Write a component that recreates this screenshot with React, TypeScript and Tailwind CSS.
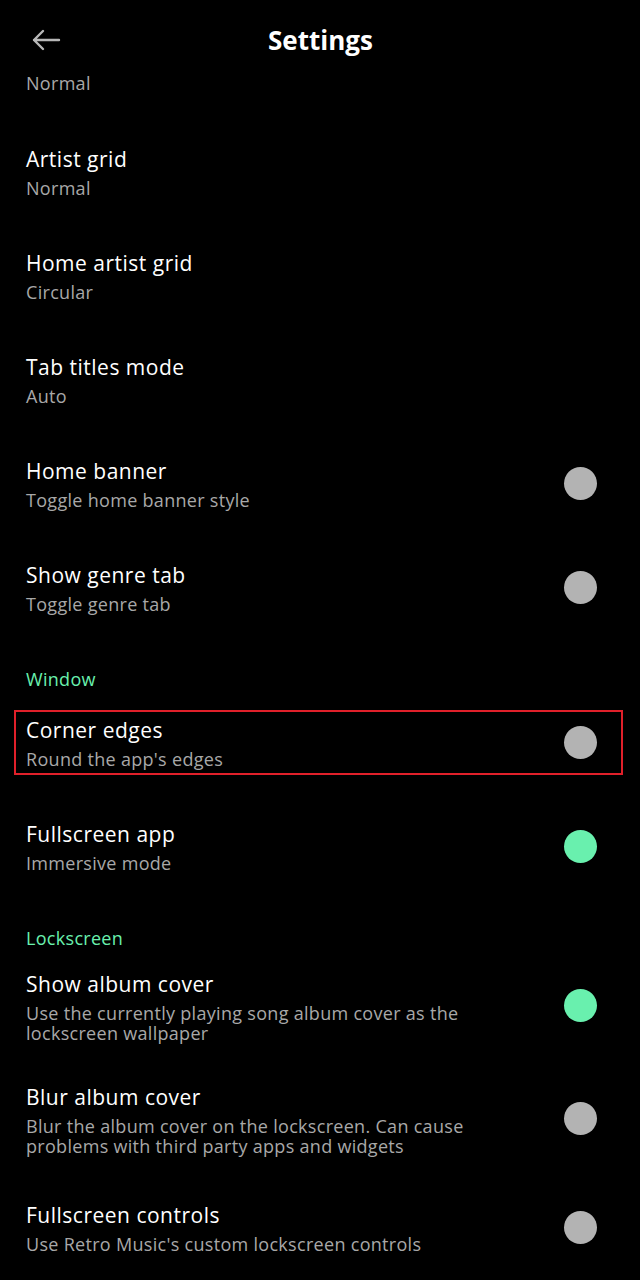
import React from 'react';

type Item = {
  title?: string;
  summary: string;
  toggle?: 'on' | 'off';
  highlight?: boolean;
};

type Section = { category?: string; items: Item[] };

const sections: Section[] = [
  {
    items: [
      { title: 'Artist grid', summary: 'Normal' },
      { title: 'Home artist grid', summary: 'Circular' },
      { title: 'Tab titles mode', summary: 'Auto' },
      { title: 'Home banner', summary: 'Toggle home banner style', toggle: 'off' },
      { title: 'Show genre tab', summary: 'Toggle genre tab', toggle: 'off' },
    ],
  },
  {
    category: 'Window',
    items: [
      { title: 'Corner edges', summary: "Round the app's edges", toggle: 'off', highlight: true },
      { title: 'Fullscreen app', summary: 'Immersive mode', toggle: 'on' },
    ],
  },
  {
    category: 'Lockscreen',
    items: [
      {
        title: 'Show album cover',
        summary: 'Use the currently playing song album cover as the lockscreen wallpaper',
        toggle: 'on',
      },
      {
        title: 'Blur album cover',
        summary: 'Blur the album cover on the lockscreen. Can cause problems with third party apps and widgets',
        toggle: 'off',
      },
      {
        title: 'Fullscreen controls',
        summary: "Use Retro Music's custom lockscreen controls",
        toggle: 'off',
      },
    ],
  },
];

function PrefRow({ item }: { item: Item }) {
  return (
    <div className="relative flex items-center min-h-[104px] py-[19.5px] pl-[26px] pr-[43px]">
      <div className="flex-1 pr-[56px]">
        <div className="text-[21px] leading-[30px] tracking-[0.5px] text-white">{item.title}</div>
        <div className="mt-1 text-[18px] leading-[20px] tracking-[0.3px] text-[#a8a8a8]">{item.summary}</div>
      </div>
      {item.toggle && (
        <div
          className={
            item.toggle === 'on'
              ? 'w-[33px] h-[33px] rounded-full bg-[#69f0ae]'
              : 'w-[33px] h-[33px] rounded-full bg-[#b3b3b3]'
          }
        />
      )}
      {item.highlight && (
        <div className="absolute left-[14px] right-[17px] top-[20px] h-[65px] border-2 border-[#e0202a] pointer-events-none" />
      )}
    </div>
  );
}

export default function App() {
  return (
    <div className="bg-black w-[640px] h-[1280px] overflow-hidden flex flex-col font-['Open_Sans',sans-serif]">
      {/* Header */}
      <div className="h-[70px] pt-[10px] shrink-0 flex items-center pl-[31px] pr-[30px]">
        <svg width="30" height="24" viewBox="0 0 30 24" className="text-[#b8b8b8]">
          <path d="M28 12H3M12 3l-9 9 9 9" fill="none" stroke="currentColor" strokeWidth="2.4" strokeLinecap="round" strokeLinejoin="round" />
        </svg>
        <div className="flex-1 text-center pr-[30px] text-[26px] leading-[30px] font-bold text-white">Settings</div>
      </div>

      {/* List */}
      <div className="flex-1 overflow-hidden">
        <div className="pt-[3px] pb-[26px] pl-[26px] text-[18px] leading-[20px] tracking-[0.3px] text-[#a8a8a8]">Normal</div>
        {sections.map((s, i) => (
          <div key={i}>
            {s.category && (
              <div className="h-[51px] pt-[29px] pl-[26px] text-[18px] leading-[22px] tracking-[0.3px] text-[#69f0ae]">{s.category}</div>
            )}
            {s.items.map((it) => (
              <PrefRow key={it.title} item={it} />
            ))}
          </div>
        ))}
      </div>
    </div>
  );
}
